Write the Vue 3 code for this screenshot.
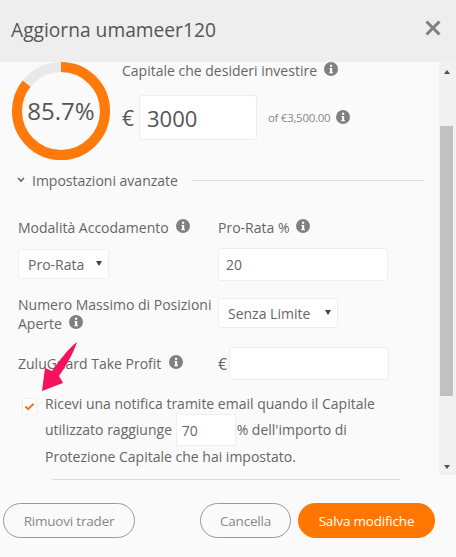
<script setup>
const infoPath = 'M7 0a7 7 0 1 0 0 14A7 7 0 0 0 7 0Z';
</script>

<template>
  <div class="modal">
    <header class="head">
      <h1 class="title">Aggiorna umameer120</h1>
      <svg class="close" viewBox="0 0 16 16" width="16" height="16"><path d="M1.5 1.5l13 13M14.500 1.500l-13 13" /></svg>
    </header>

    <div class="scroller">
      <div class="content">
        <section class="capital">
          <div class="gauge">
            <svg viewBox="0 0 98 98" width="98" height="98">
              <circle cx="49" cy="49" r="44" fill="none" stroke="#e9e9e9" stroke-width="10" />
              <circle cx="49" cy="49" r="44" fill="none" stroke="#ff7a0a" stroke-width="10" pathLength="100" stroke-dasharray="85.7 14.3" transform="rotate(-90 49 49)" />
            </svg>
            <span class="pct">85.7%</span>
          </div>
          <div class="invest">
            <div class="lbl invest-lbl">Capitale che desideri investire
              <svg class="info tight" viewBox="0 0 14 14"><path :d="infoPath" /><path class="i" d="M5.500 6h2.700v4.200h.8v1H5.200v-1h.8V7h-.5ZM6 2.800h2.200v2H6Z" /></svg>
            </div>
            <div class="amount">
              <span class="euro">€</span>
              <input class="big-input" value="3000" />
              <span class="of">of €3,500.00</span>
              <svg class="info" viewBox="0 0 14 14"><path :d="infoPath" /><path class="i" d="M5.500 6h2.700v4.200h.8v1H5.200v-1h.8V7h-.5ZM6 2.800h2.200v2H6Z" /></svg>
            </div>
          </div>
        </section>

        <div class="adv">
          <svg class="chev" viewBox="0 0 8 6" width="8" height="6"><path d="M1 1l3 3 3-3" /></svg>
          <span class="lbl">Impostazioni avanzate</span>
          <span class="adv-line"></span>
        </div>

        <div class="grid">
          <div class="lbl cell-l1">Modalità Accodamento
            <svg class="info" viewBox="0 0 14 14"><path :d="infoPath" /><path class="i" d="M5.500 6h2.700v4.200h.8v1H5.200v-1h.8V7h-.5ZM6 2.800h2.200v2H6Z" /></svg>
          </div>
          <div class="lbl cell-l1">Pro-Rata %
            <svg class="info tight" viewBox="0 0 14 14"><path :d="infoPath" /><path class="i" d="M5.500 6h2.700v4.200h.8v1H5.200v-1h.8V7h-.5ZM6 2.800h2.200v2H6Z" /></svg>
          </div>
          <div class="fake-select sel1"><span>Pro-Rata</span><i class="caret"></i></div>
          <input class="text-input wide" value="20" />
          <div class="lbl num-lbl">Numero Massimo di Posizioni Aperte
            <svg class="info tight" viewBox="0 0 14 14"><path :d="infoPath" /><path class="i" d="M5.500 6h2.700v4.200h.8v1H5.200v-1h.8V7h-.5ZM6 2.800h2.200v2H6Z" /></svg>
          </div>
          <div class="fake-select sel2"><span>Senza Limite</span><i class="caret"></i></div>
          <div class="lbl zulu">ZuluGuard Take Profit
            <svg class="info" viewBox="0 0 14 14"><path :d="infoPath" /><path class="i" d="M5.500 6h2.700v4.200h.8v1H5.200v-1h.8V7h-.5ZM6 2.800h2.200v2H6Z" /></svg>
          </div>
          <div class="tp"><span class="tp-euro">€</span><input class="text-input tp-input" /></div>
        </div>

        <div class="notify">
          <span class="check">
            <svg viewBox="0 0 12 10" width="11" height="9"><path d="M1.500 5l3 3 6-6" /></svg>
          </span>
          <div class="notify-text">
            <div class="n1">Ricevi una notifica tramite email quando il Capitale</div>
            <div class="n2">utilizzato raggiunge <input class="pct-input" value="70" />% dell'importo di</div>
            <div class="n3">Protezione Capitale che hai impostato.</div>
          </div>
        </div>
      </div>

      <div class="bar">
        <i class="arr up"></i>
        <div class="track"><div class="thumb"></div></div>
        <i class="arr down"></i>
      </div>

      <svg class="arrow" viewBox="0 0 38 51" width="38" height="51">
        <path d="M36 1 C32 13 25 25 18 35 L22 42 L1 50 L4 27 L11 30 C18 20 27 8 36 1Z" fill="#f5125f" />
      </svg>
    </div>

    <footer class="foot">
      <div class="rule"></div>
      <div class="btns">
        <button class="btn ghost remove">Rimuovi trader</button>
        <span class="spacer"></span>
        <button class="btn ghost cancel">Cancella</button>
        <button class="btn save">Salva modifiche</button>
      </div>
    </footer>
  </div>
</template>

<style>
html, body { margin: 0; padding: 0; background: #fafafa; }
</style>

<style scoped>
.modal {
  width: 456px;
  height: 557px;
  display: flex;
  flex-direction: column;
  overflow: hidden;
  background: #fafafa;
  color: #666;
  font-family: "Open Sans", sans-serif;
  font-size: 14px;
}
.head {
  height: 62px;
  flex: none;
  background: #eeeeee;
  display: flex;
  align-items: center;
  justify-content: space-between;
  padding: 0 15px 4px 11px;
  box-sizing: border-box;
}
.title {
  margin: 0;
  font-size: 19.2px;
  font-weight: 400;
  color: #555;
}
.close { margin-bottom: 2px; }
.close path { stroke: #808080; stroke-width: 3; fill: none; }

.scroller {
  position: relative;
  height: 413px;
  flex: none;
  display: flex;
}
.content {
  flex: 1;
  min-width: 0;
  overflow: hidden;
}
.bar {
  width: 17px;
  flex: none;
  background: #f1f1f1;
  display: flex;
  flex-direction: column;
  align-items: center;
  padding-right: 1px;
  box-sizing: border-box;
}
.track { flex: 1; width: 100%; padding-top: 46px; box-sizing: border-box; }
.thumb { width: 13px; height: 270px; margin-left: 1px; background: #c1c1c1; }
.arr { width: 0; height: 0; border-left: 3.500px solid transparent; border-right: 3.500px solid transparent; flex: none; }
.arr.up { border-bottom: 4px solid #505050; margin: 8px 0 6px; }
.arr.down { border-top: 4px solid #505050; margin: 0 0 6px; }

.arrow { position: absolute; left: 41px; top: 279px; }

.lbl { color: #666; font-size: 14px; line-height: 19px; }
.info { width: 14px; height: 14px; fill: #808080; vertical-align: 0; margin-left: 4px; }
.info.tight { margin-left: 3px; }
.info .i { fill: #fff; }

.capital { display: flex; padding-left: 12px; height: 97px; }
.gauge { position: relative; width: 98px; height: 98px; flex: none; }
.gauge svg { display: block; }
.pct {
  position: absolute;
  inset: 0 0 2px;
  display: flex;
  align-items: center;
  justify-content: center;
  font-size: 24px;
  color: #555;
}
.invest { margin-left: 12px; }
.invest-lbl { margin-top: -1px; height: 34px; padding-top: 0; }
.amount { display: flex; align-items: center; }
.euro { font-size: 21px; color: #555; width: 17px; flex: none; }
.big-input {
  width: 118px;
  height: 45px;
  box-sizing: border-box;
  border: 1px solid #eee;
  border-radius: 3px;
  background: #fff;
  padding: 0 7px;
  font: 22px "Open Sans", sans-serif;
  color: #555;
  outline: none;
}
.of { margin-left: 11px; font-size: 11.500px; letter-spacing: -0.3px; color: #888; }
.amount .info { margin-left: 6px; margin-top: -1px; }

.adv { display: flex; align-items: center; height: 20px; margin-top: 11px; padding-left: 17px; }
.chev path { fill: none; stroke: #666; stroke-width: 1.6; }
.adv .lbl { margin-left: 7px; }
.adv-line { width: 232px; height: 1px; background: #ddd; margin-left: 14px; }

.grid {
  display: grid;
  grid-template-columns: 200px 1fr;
  padding-left: 18px;
  margin-top: 28px;
  align-items: start;
}
.cell-l1 { height: 30px; padding-top: 0; }
.fake-select {
  display: flex;
  align-items: center;
  justify-content: space-between;
  box-sizing: border-box;
  background: #fff;
  border: 1px solid #eee;
  border-radius: 3px;
  height: 30px;
  padding: 0 6px 0 9px;
  color: #666;
}
.sel1 { width: 91px; margin-top: 1px; }
.sel2 { width: 120px; margin-top: 0; }
.caret {
  width: 0;
  height: 0;
  border-left: 3px solid transparent;
  border-right: 3px solid transparent;
  border-top: 5px solid #444;
  margin-bottom: 2px;
}
.text-input {
  display: block;
  box-sizing: border-box;
  background: #fff;
  border: 1px solid #eee;
  border-radius: 3px;
  height: 33px;
  padding: 0 7px;
  font: 14px "Open Sans", sans-serif;
  color: #666;
  outline: none;
}
.wide { width: 170px; }
.num-lbl { margin-top: 14px; width: 198px; }
.grid .sel2 { margin-top: 17px; }
.zulu { margin-top: 21px; }
.tp { display: flex; align-items: center; margin-top: 14px; }
.tp-euro { width: 11px; flex: none; font-size: 16px; }
.tp-input { width: 160px; }

.notify { display: flex; padding-left: 22px; margin-top: 14px; }
.check {
  width: 15px;
  height: 17px;
  box-sizing: border-box;
  flex: none;
  margin-top: 4px;
  border: 1px solid #eee;
  background: #fff;
  display: flex;
  align-items: center;
  justify-content: center;
}
.check path { fill: none; stroke: #f47216; stroke-width: 2.2; }
.notify-text { margin-left: 8px; color: #666; font-size: 14px; line-height: 19px; white-space: nowrap; }
.n2 { margin-top: 1px; height: 30px; padding-bottom: 2px; display: flex; align-items: center; white-space: pre; }
.pct-input {
  width: 60px;
  height: 32px;
  box-sizing: border-box;
  border: 1px solid #eee;
  background: #fff;
  padding: 0 5px;
  margin: 0 1px -2px 0;
  font: 14px "Open Sans", sans-serif;
  color: #666;
  outline: none;
}
.n3 { margin-top: 1px; }

.foot { flex: 1; }
.rule { height: 1px; background: #ddd; width: 348px; margin: 4px 0 0 52px; }
.btns { display: flex; align-items: center; padding: 23px 21px 0 3px; }
.spacer { flex: 1; }
.btn {
  height: 35px;
  border-radius: 18px;
  font: 13.500px "Open Sans", sans-serif;
  box-sizing: border-box;
  padding: 0;
  letter-spacing: -0.2px;
}
.ghost { background: #fafafa; border: 1px solid #999; color: #888; }
.remove { width: 132px; }
.cancel { width: 91px; }
.save { width: 137px; margin-left: 7px; background: #ff7700; border: none; color: #fff; }
</style>
